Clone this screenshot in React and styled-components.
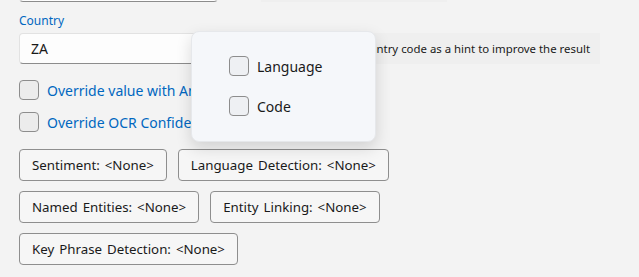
import React from "react";
import styled, { createGlobalStyle } from "styled-components";

const Global = createGlobalStyle`
  html, body { margin: 0; padding: 0; background: #f3f3f3; }
  body { font-family: "Noto Sans", "Open Sans", sans-serif; color: #1b1b1b; overflow: hidden; }
`;

const Page = styled.div`
  position: relative;
  display: flow-root;
  width: 639px;
  height: 277px;
  padding-left: 19px;
  box-sizing: border-box;
  overflow: hidden;
`;

const Row = styled.div`
  display: flex;
  align-items: ${(p) => p.$align || "stretch"};
  gap: ${(p) => p.$gap || 0}px;
  margin-top: ${(p) => p.$mt || 0}px;
`;

const TextInput = styled.div`
  box-sizing: border-box;
  width: 199px;
  height: 31px;
  background: #fdfdfd;
  border: 1px solid #e2e2e2;
  border-bottom: 1px solid #8c8c8c;
  border-radius: 4px;
  display: flex;
  align-items: center;
  padding-left: 11px;
  font-size: 14px;
  color: #1a1a1a;
`;

const Hint = styled.div`
  box-sizing: border-box;
  width: ${(p) => p.$w}px;
  height: 31px;
  background: #efefef;
  display: flex;
  align-items: center;
  justify-content: flex-end;
  padding-right: 10px;
  font-size: 11.4px;
  color: #1a1a1a;
  white-space: nowrap;
  overflow: hidden;
`;

const Label = styled.div`
  font-size: 12px;
  color: #0067c0;
  line-height: 16px;
  margin-top: 11px;
  height: 18px;
`;

const CheckRow = styled.label`
  display: flex;
  align-items: center;
  gap: 8px;
  height: 20px;
  margin-top: ${(p) => p.$mt}px;
  font-size: 14px;
  color: ${(p) => p.$color || "#1a1a1a"};
  white-space: nowrap;
`;

const Box = styled.span`
  box-sizing: border-box;
  width: 20px;
  height: 20px;
  border: 1px solid #8d8d8d;
  border-radius: 4px;
  background: ${(p) => p.$bg || "#ececec"};
  flex: none;
`;

const Buttons = styled.div`
  display: flex;
  flex-direction: column;
  gap: 10px;
  margin-top: 17px;
`;

const ButtonRow = styled.div`
  display: flex;
  gap: 11px;
`;

const Btn = styled.div`
  box-sizing: border-box;
  height: 32px;
  border: 1px solid #8e8e8e;
  border-radius: 4px;
  background: #f6f6f6;
  display: flex;
  align-items: center;
  padding: 0 12px;
  font-size: 13.3px;
  color: #1a1a1a;
  white-space: nowrap;
  word-spacing: 1.5px;
`;

const Flyout = styled.div`
  position: absolute;
  left: 191px;
  top: 31px;
  width: 185px;
  height: 111px;
  box-sizing: border-box;
  background: #f5f7fa;
  border-radius: 8px;
  border: 1px solid #e6e8eb;
  box-shadow: 0 6px 16px rgba(0, 0, 0, 0.14);
  padding: 24px 0 0 37px;
`;

const TopStub = styled(Row)`
  margin-top: -29px;
  height: 31px;
`;

export default function App() {
  return (
    <Page>
      <Global />
      <TopStub $gap={43}>
        <TextInput />
        <Hint $w={186} />
      </TopStub>
      <Label>Country</Label>
      <Row $gap={43} $mt={2}>
        <TextInput>ZA</TextInput>
        <Hint $w={339}>Use the country code as a hint to improve the result</Hint>
      </Row>
      <CheckRow $mt={16} $color="#0067c0">
        <Box />
        Override value with Analysis
      </CheckRow>
      <CheckRow $mt={12} $color="#0067c0">
        <Box />
        Override OCR Confidence
      </CheckRow>
      <Buttons>
        <ButtonRow>
          <Btn>Sentiment: &lt;None&gt;</Btn>
          <Btn>Language Detection: &lt;None&gt;</Btn>
        </ButtonRow>
        <ButtonRow>
          <Btn>Named Entities: &lt;None&gt;</Btn>
          <Btn>Entity Linking: &lt;None&gt;</Btn>
        </ButtonRow>
        <ButtonRow>
          <Btn>Key Phrase Detection: &lt;None&gt;</Btn>
        </ButtonRow>
      </Buttons>
      <Flyout>
        <CheckRow $mt={0}>
          <Box $bg="#eef0f3" />
          Language
        </CheckRow>
        <CheckRow $mt={20}>
          <Box $bg="#eef0f3" />
          Code
        </CheckRow>
      </Flyout>
    </Page>
  );
}
